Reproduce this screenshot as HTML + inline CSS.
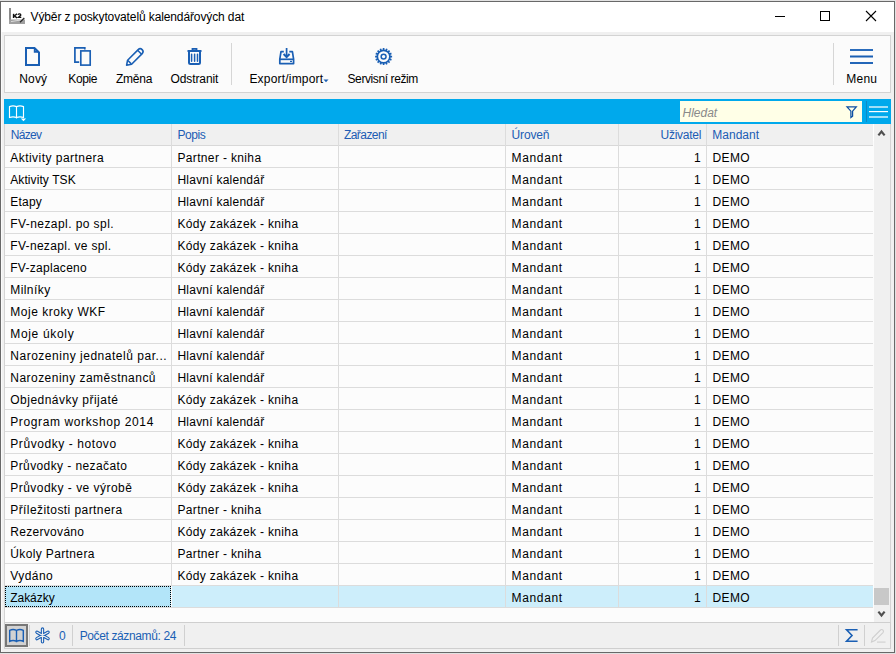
<!DOCTYPE html><html><head><meta charset="utf-8"><style>
*{margin:0;padding:0;box-sizing:border-box}
html,body{width:896px;height:654px;overflow:hidden;background:#e2e2e2}
body{font-family:"Liberation Sans",sans-serif;font-size:12px;color:#000;position:relative}
.a{position:absolute}
.t{position:absolute;white-space:nowrap;line-height:14px}
.lbl{position:absolute;white-space:nowrap;line-height:14px;top:72px}
.ht{position:absolute;top:128px;line-height:14px;color:#205cb4;white-space:nowrap}
.c{position:absolute;line-height:14px;white-space:nowrap;letter-spacing:0.4px}
#ov{position:absolute;left:0;top:0}
</style></head><body>
<div class="a" style="left:0px;top:1px;width:895px;height:652px;background:#686868;"></div>
<div class="a" style="left:1px;top:2px;width:893px;height:650px;background:#f0f0f0;"></div>
<div class="a" style="left:1px;top:2px;width:893px;height:30px;background:#fff;"></div>
<div class="a" style="left:1px;top:32px;width:1px;height:620px;background:#fafafa;"></div>
<div class="a" style="left:4px;top:35px;width:887px;height:58px;background:#fbfbfb;border:1px solid #d3d3d3"></div>
<div class="a" style="left:4px;top:99px;width:887px;height:25px;background:#00a9ec;"></div>
<div class="a" style="left:680px;top:101px;width:182px;height:21px;background:#ffffe7;"></div>
<div class="a" style="left:866px;top:101px;width:1px;height:21px;background:#0f8ac4;"></div>
<div class="a" style="left:4px;top:124px;width:887px;height:498px;background:#fcfcfc;border-left:1px solid #d4d4d4;border-right:1px solid #d4d4d4"></div>
<div class="a" style="left:5px;top:124px;width:868px;height:21px;background:#f0f0f0;"></div>
<div class="a" style="left:5px;top:145px;width:868px;height:1px;background:#d8d8d8;"></div>
<div class="a" style="left:5px;top:167px;width:868px;height:1px;background:#dcdcdc;"></div>
<div class="a" style="left:5px;top:189px;width:868px;height:1px;background:#dcdcdc;"></div>
<div class="a" style="left:5px;top:211px;width:868px;height:1px;background:#dcdcdc;"></div>
<div class="a" style="left:5px;top:233px;width:868px;height:1px;background:#dcdcdc;"></div>
<div class="a" style="left:5px;top:255px;width:868px;height:1px;background:#dcdcdc;"></div>
<div class="a" style="left:5px;top:277px;width:868px;height:1px;background:#dcdcdc;"></div>
<div class="a" style="left:5px;top:299px;width:868px;height:1px;background:#dcdcdc;"></div>
<div class="a" style="left:5px;top:321px;width:868px;height:1px;background:#dcdcdc;"></div>
<div class="a" style="left:5px;top:343px;width:868px;height:1px;background:#dcdcdc;"></div>
<div class="a" style="left:5px;top:365px;width:868px;height:1px;background:#dcdcdc;"></div>
<div class="a" style="left:5px;top:387px;width:868px;height:1px;background:#dcdcdc;"></div>
<div class="a" style="left:5px;top:409px;width:868px;height:1px;background:#dcdcdc;"></div>
<div class="a" style="left:5px;top:431px;width:868px;height:1px;background:#dcdcdc;"></div>
<div class="a" style="left:5px;top:453px;width:868px;height:1px;background:#dcdcdc;"></div>
<div class="a" style="left:5px;top:475px;width:868px;height:1px;background:#dcdcdc;"></div>
<div class="a" style="left:5px;top:497px;width:868px;height:1px;background:#dcdcdc;"></div>
<div class="a" style="left:5px;top:519px;width:868px;height:1px;background:#dcdcdc;"></div>
<div class="a" style="left:5px;top:541px;width:868px;height:1px;background:#dcdcdc;"></div>
<div class="a" style="left:5px;top:563px;width:868px;height:1px;background:#dcdcdc;"></div>
<div class="a" style="left:5px;top:585px;width:868px;height:1px;background:#dcdcdc;"></div>
<div class="a" style="left:5px;top:607px;width:868px;height:1px;background:#dcdcdc;"></div>
<div class="a" style="left:5px;top:586px;width:868px;height:21px;background:#cdeefb;"></div>
<div class="a" style="left:171px;top:124px;width:1px;height:484px;background:#dcdcdc;"></div>
<div class="a" style="left:338px;top:124px;width:1px;height:484px;background:#dcdcdc;"></div>
<div class="a" style="left:505px;top:124px;width:1px;height:484px;background:#dcdcdc;"></div>
<div class="a" style="left:618px;top:124px;width:1px;height:484px;background:#dcdcdc;"></div>
<div class="a" style="left:706px;top:124px;width:1px;height:484px;background:#dcdcdc;"></div>
<div class="a" style="left:5px;top:586px;width:166px;height:21px;background:#b3e5f9;border:1px dotted #000"></div>
<div class="a" style="left:171px;top:586px;width:1px;height:21px;background:#fcfcfc;"></div>
<div class="a" style="left:873px;top:124px;width:1px;height:17px;background:#fff;"></div>
<div class="a" style="left:874px;top:124px;width:16px;height:498px;background:#f0f0f0;"></div>
<div class="a" style="left:874px;top:588px;width:15px;height:17px;background:#c8c8c8;"></div>
<div class="a" style="left:4px;top:622px;width:887px;height:27px;background:#f0f0f0;border:1px solid #cfcfcf"></div>
<div class="a" style="left:5px;top:624px;width:23px;height:23px;background:#d2d2d2;border:2px solid #777"></div>
<div class="a" style="left:29px;top:625px;width:1px;height:21px;background:#d0d0d0;"></div>
<div class="a" style="left:72px;top:625px;width:1px;height:21px;background:#d0d0d0;"></div>
<div class="a" style="left:184px;top:625px;width:1px;height:21px;background:#d0d0d0;"></div>
<div class="a" style="left:838px;top:625px;width:1px;height:21px;background:#d0d0d0;"></div>
<div class="a" style="left:864px;top:625px;width:1px;height:21px;background:#d0d0d0;"></div>
<div class="a" style="left:231px;top:43px;width:1px;height:42px;background:#d6d6d6;"></div>
<div class="a" style="left:833px;top:43px;width:1px;height:42px;background:#d6d6d6;"></div>
<div class="t" style="left:30.5px;top:10px;letter-spacing:-0.113px">Výběr z poskytovatelů kalendářových dat</div>
<div class="lbl" style="left:19.30px;letter-spacing:0.153px">Nový</div>
<div class="lbl" style="left:68.30px;letter-spacing:-0.379px">Kopie</div>
<div class="lbl" style="left:116.00px;letter-spacing:-0.243px">Změna</div>
<div class="lbl" style="left:170.40px;letter-spacing:-0.081px">Odstranit</div>
<div class="lbl" style="left:249.40px;letter-spacing:0.198px">Export/import</div>
<div class="lbl" style="left:347.50px;letter-spacing:-0.401px">Servisní režim</div>
<div class="lbl" style="left:846.30px;letter-spacing:0.219px">Menu</div>
<div class="t" style="left:682.5px;top:106px;color:#8a8a8a;font-style:italic">Hledat</div>
<div class="ht" style="left:10.80px;letter-spacing:-0.728px">Název</div>
<div class="ht" style="left:177.40px;letter-spacing:-0.404px">Popis</div>
<div class="ht" style="left:343.90px;letter-spacing:-0.546px">Zařazení</div>
<div class="ht" style="left:511.60px;letter-spacing:-0.162px">Úroveň</div>
<div class="ht" style="left:660.50px;letter-spacing:-0.259px">Uživatel</div>
<div class="ht" style="left:712.3px">Mandant</div>
<div class="c" style="left:10.25px;top:151px;letter-spacing:0.465px">Aktivity partnera</div>
<div class="c" style="left:177.40px;top:151px;letter-spacing:0.355px">Partner - kniha</div>
<div class="c" style="left:511.60px;top:151px;letter-spacing:0.639px">Mandant</div>
<div class="c" style="left:694px;top:151px">1</div>
<div class="c" style="left:712.60px;top:151px;letter-spacing:0.311px">DEMO</div>
<div class="c" style="left:10.25px;top:173px;letter-spacing:0.084px">Aktivity TSK</div>
<div class="c" style="left:177.40px;top:173px;letter-spacing:0.244px">Hlavní kalendář</div>
<div class="c" style="left:511.60px;top:173px;letter-spacing:0.639px">Mandant</div>
<div class="c" style="left:694px;top:173px">1</div>
<div class="c" style="left:712.60px;top:173px;letter-spacing:0.311px">DEMO</div>
<div class="c" style="left:10.25px;top:195px;letter-spacing:0.229px">Etapy</div>
<div class="c" style="left:177.40px;top:195px;letter-spacing:0.244px">Hlavní kalendář</div>
<div class="c" style="left:511.60px;top:195px;letter-spacing:0.639px">Mandant</div>
<div class="c" style="left:694px;top:195px">1</div>
<div class="c" style="left:712.60px;top:195px;letter-spacing:0.311px">DEMO</div>
<div class="c" style="left:10.25px;top:217px;letter-spacing:0.428px">FV-nezapl. po spl.</div>
<div class="c" style="left:177.40px;top:217px;letter-spacing:0.348px">Kódy zakázek - kniha</div>
<div class="c" style="left:511.60px;top:217px;letter-spacing:0.639px">Mandant</div>
<div class="c" style="left:694px;top:217px">1</div>
<div class="c" style="left:712.60px;top:217px;letter-spacing:0.311px">DEMO</div>
<div class="c" style="left:10.25px;top:239px;letter-spacing:0.321px">FV-nezapl. ve spl.</div>
<div class="c" style="left:177.40px;top:239px;letter-spacing:0.348px">Kódy zakázek - kniha</div>
<div class="c" style="left:511.60px;top:239px;letter-spacing:0.639px">Mandant</div>
<div class="c" style="left:694px;top:239px">1</div>
<div class="c" style="left:712.60px;top:239px;letter-spacing:0.311px">DEMO</div>
<div class="c" style="left:10.25px;top:261px;letter-spacing:0.282px">FV-zaplaceno</div>
<div class="c" style="left:177.40px;top:261px;letter-spacing:0.348px">Kódy zakázek - kniha</div>
<div class="c" style="left:511.60px;top:261px;letter-spacing:0.639px">Mandant</div>
<div class="c" style="left:694px;top:261px">1</div>
<div class="c" style="left:712.60px;top:261px;letter-spacing:0.311px">DEMO</div>
<div class="c" style="left:10.25px;top:283px;letter-spacing:0.427px">Milníky</div>
<div class="c" style="left:177.40px;top:283px;letter-spacing:0.244px">Hlavní kalendář</div>
<div class="c" style="left:511.60px;top:283px;letter-spacing:0.639px">Mandant</div>
<div class="c" style="left:694px;top:283px">1</div>
<div class="c" style="left:712.60px;top:283px;letter-spacing:0.311px">DEMO</div>
<div class="c" style="left:10.25px;top:305px;letter-spacing:0.532px">Moje kroky WKF</div>
<div class="c" style="left:177.40px;top:305px;letter-spacing:0.244px">Hlavní kalendář</div>
<div class="c" style="left:511.60px;top:305px;letter-spacing:0.639px">Mandant</div>
<div class="c" style="left:694px;top:305px">1</div>
<div class="c" style="left:712.60px;top:305px;letter-spacing:0.311px">DEMO</div>
<div class="c" style="left:10.25px;top:327px;letter-spacing:0.671px">Moje úkoly</div>
<div class="c" style="left:177.40px;top:327px;letter-spacing:0.244px">Hlavní kalendář</div>
<div class="c" style="left:511.60px;top:327px;letter-spacing:0.639px">Mandant</div>
<div class="c" style="left:694px;top:327px">1</div>
<div class="c" style="left:712.60px;top:327px;letter-spacing:0.311px">DEMO</div>
<div class="c" style="left:10.25px;top:349px;letter-spacing:0.522px">Narozeniny jednatelů par...</div>
<div class="c" style="left:177.40px;top:349px;letter-spacing:0.244px">Hlavní kalendář</div>
<div class="c" style="left:511.60px;top:349px;letter-spacing:0.639px">Mandant</div>
<div class="c" style="left:694px;top:349px">1</div>
<div class="c" style="left:712.60px;top:349px;letter-spacing:0.311px">DEMO</div>
<div class="c" style="left:10.25px;top:371px;letter-spacing:0.47px">Narozeniny zaměstnanců</div>
<div class="c" style="left:177.40px;top:371px;letter-spacing:0.244px">Hlavní kalendář</div>
<div class="c" style="left:511.60px;top:371px;letter-spacing:0.639px">Mandant</div>
<div class="c" style="left:694px;top:371px">1</div>
<div class="c" style="left:712.60px;top:371px;letter-spacing:0.311px">DEMO</div>
<div class="c" style="left:10.25px;top:393px;letter-spacing:0.487px">Objednávky přijaté</div>
<div class="c" style="left:177.40px;top:393px;letter-spacing:0.348px">Kódy zakázek - kniha</div>
<div class="c" style="left:511.60px;top:393px;letter-spacing:0.639px">Mandant</div>
<div class="c" style="left:694px;top:393px">1</div>
<div class="c" style="left:712.60px;top:393px;letter-spacing:0.311px">DEMO</div>
<div class="c" style="left:10.25px;top:415px;letter-spacing:0.617px">Program workshop 2014</div>
<div class="c" style="left:177.40px;top:415px;letter-spacing:0.244px">Hlavní kalendář</div>
<div class="c" style="left:511.60px;top:415px;letter-spacing:0.639px">Mandant</div>
<div class="c" style="left:694px;top:415px">1</div>
<div class="c" style="left:712.60px;top:415px;letter-spacing:0.311px">DEMO</div>
<div class="c" style="left:10.25px;top:437px;letter-spacing:0.572px">Průvodky - hotovo</div>
<div class="c" style="left:177.40px;top:437px;letter-spacing:0.348px">Kódy zakázek - kniha</div>
<div class="c" style="left:511.60px;top:437px;letter-spacing:0.639px">Mandant</div>
<div class="c" style="left:694px;top:437px">1</div>
<div class="c" style="left:712.60px;top:437px;letter-spacing:0.311px">DEMO</div>
<div class="c" style="left:10.25px;top:459px;letter-spacing:0.405px">Průvodky - nezačato</div>
<div class="c" style="left:177.40px;top:459px;letter-spacing:0.348px">Kódy zakázek - kniha</div>
<div class="c" style="left:511.60px;top:459px;letter-spacing:0.639px">Mandant</div>
<div class="c" style="left:694px;top:459px">1</div>
<div class="c" style="left:712.60px;top:459px;letter-spacing:0.311px">DEMO</div>
<div class="c" style="left:10.25px;top:481px;letter-spacing:0.472px">Průvodky - ve výrobě</div>
<div class="c" style="left:177.40px;top:481px;letter-spacing:0.348px">Kódy zakázek - kniha</div>
<div class="c" style="left:511.60px;top:481px;letter-spacing:0.639px">Mandant</div>
<div class="c" style="left:694px;top:481px">1</div>
<div class="c" style="left:712.60px;top:481px;letter-spacing:0.311px">DEMO</div>
<div class="c" style="left:10.25px;top:503px;letter-spacing:0.425px">Příležitosti partnera</div>
<div class="c" style="left:177.40px;top:503px;letter-spacing:0.355px">Partner - kniha</div>
<div class="c" style="left:511.60px;top:503px;letter-spacing:0.639px">Mandant</div>
<div class="c" style="left:694px;top:503px">1</div>
<div class="c" style="left:712.60px;top:503px;letter-spacing:0.311px">DEMO</div>
<div class="c" style="left:10.25px;top:525px;letter-spacing:0.307px">Rezervováno</div>
<div class="c" style="left:177.40px;top:525px;letter-spacing:0.348px">Kódy zakázek - kniha</div>
<div class="c" style="left:511.60px;top:525px;letter-spacing:0.639px">Mandant</div>
<div class="c" style="left:694px;top:525px">1</div>
<div class="c" style="left:712.60px;top:525px;letter-spacing:0.311px">DEMO</div>
<div class="c" style="left:10.25px;top:547px;letter-spacing:0.37px">Úkoly Partnera</div>
<div class="c" style="left:177.40px;top:547px;letter-spacing:0.355px">Partner - kniha</div>
<div class="c" style="left:511.60px;top:547px;letter-spacing:0.639px">Mandant</div>
<div class="c" style="left:694px;top:547px">1</div>
<div class="c" style="left:712.60px;top:547px;letter-spacing:0.311px">DEMO</div>
<div class="c" style="left:10.25px;top:569px;letter-spacing:0.444px">Vydáno</div>
<div class="c" style="left:177.40px;top:569px;letter-spacing:0.348px">Kódy zakázek - kniha</div>
<div class="c" style="left:511.60px;top:569px;letter-spacing:0.639px">Mandant</div>
<div class="c" style="left:694px;top:569px">1</div>
<div class="c" style="left:712.60px;top:569px;letter-spacing:0.311px">DEMO</div>
<div class="c" style="left:10.25px;top:591px;letter-spacing:-0.046px">Zakázky</div>
<div class="c" style="left:511.60px;top:591px;letter-spacing:0.639px">Mandant</div>
<div class="c" style="left:694px;top:591px">1</div>
<div class="c" style="left:712.60px;top:591px;letter-spacing:0.311px">DEMO</div>
<div class="t" style="left:59px;top:629px;color:#1a5fb4">0</div>
<div class="t" style="left:79.7px;top:629px;color:#1a5fb4;letter-spacing:-0.378px">Počet záznamů: 24</div>
<svg id="ov" width="896" height="654" viewBox="0 0 896 654"><rect x="9" y="8" width="2" height="16" fill="#8a8a8a"/><rect x="9" y="19.5" width="16" height="4.5" fill="#a0a0a0"/><path d="M11 21.6 L17 20.6 L22 19.8" stroke="#e0e0e0" stroke-width="0.9" fill="none"/><path d="M20 22.2 L24.3 18" stroke="#2a2a2a" stroke-width="1.3"/><path d="M13.6 13.8 V18" stroke="#111" stroke-width="1.5"/><path d="M17 13.8 L14.4 15.9 L17.1 18" stroke="#111" stroke-width="1.4" fill="none"/><path d="M17.9 14.8 Q18.5 13.7 19.7 13.8 Q21 14 20.7 15.3 L18.4 17.3 H21.3" stroke="#111" stroke-width="1.3" fill="none"/><rect x="775" y="16" width="10" height="1" fill="#000"/><rect x="820.5" y="11.5" width="9" height="9" fill="none" stroke="#000" stroke-width="1"/><path d="M866 11 L876 21 M876 11 L866 21" stroke="#000" stroke-width="1.1"/><path d="M26 48 H34.5 L39 52.5 V65 H26 Z" fill="none" stroke="#1a5fb4" stroke-width="2" stroke-linejoin="miter"/><path d="M34.6 48 V51.9 H39" fill="none" stroke="#1a5fb4" stroke-width="1.6"/><path d="M35.2 48.2 L38.8 51.6 L35.2 51.6 Z" fill="#1a5fb4" opacity="0.6"/><path d="M79.2 62.2 H74.9 V47.9 H84.8 V49.6" fill="none" stroke="#1a5fb4" stroke-width="1.7" stroke-linejoin="miter"/><rect x="80.8" y="50.9" width="9.4" height="14.2" fill="none" stroke="#1a5fb4" stroke-width="1.65"/><path d="M127.6 60.2 L138.2 49.6 A2.83 2.83 0 0 1 142.2 53.6 L131.6 64.2 L126.6 65.2 Z" fill="none" stroke="#1a5fb4" stroke-width="1.6" stroke-linejoin="round"/><path d="M137.6 50.2 L141.6 54.2 M127.9 60.5 L131.3 63.9" fill="none" stroke="#1a5fb4" stroke-width="1.5"/><path d="M187.5 51 H201.5" fill="none" stroke="#1a5fb4" stroke-width="2"/><path d="M192.5 51 V48.9 H196.5 V51" fill="none" stroke="#1a5fb4" stroke-width="1.8"/><path d="M189 51.5 V62.5 Q189 64 190.5 64 H198.5 Q200 64 200 62.5 V51.5" fill="none" stroke="#1a5fb4" stroke-width="2"/><path d="M191.6 54.3 V61.3 M194.6 54.3 V61.3 M197.5 54.3 V61.3" fill="none" stroke="#1a5fb4" stroke-width="1.5" stroke-linecap="round"/><path d="M283.8 51.7 H281 L279.8 59.2 V63.6 H293.6 V59.2 L292.4 51.7 H289.3" fill="none" stroke="#1a5fb4" stroke-width="1.7" stroke-linejoin="round"/><path d="M279.8 59.3 H293.6" fill="none" stroke="#1a5fb4" stroke-width="1.7"/><path d="M286.6 48 V56.5" fill="none" stroke="#1a5fb4" stroke-width="1.7"/><path d="M283.6 54 L286.6 57 L289.6 54" fill="none" stroke="#1a5fb4" stroke-width="2"/><rect x="290" y="60.8" width="2" height="1.2" fill="#1a5fb4"/><circle cx="383.6" cy="56.6" r="6.3" fill="none" stroke="#1a5fb4" stroke-width="1.7"/><path d="M383.60 50.40 L383.60 48.10 M385.97 50.87 L386.85 48.75 M387.98 52.22 L389.61 50.59 M389.33 54.23 L391.45 53.35 M389.80 56.60 L392.10 56.60 M389.33 58.97 L391.45 59.85 M387.98 60.98 L389.61 62.61 M385.97 62.33 L386.85 64.45 M383.60 62.80 L383.60 65.10 M381.23 62.33 L380.35 64.45 M379.22 60.98 L377.59 62.61 M377.87 58.97 L375.75 59.85 M377.40 56.60 L375.10 56.60 M377.87 54.23 L375.75 53.35 M379.22 52.22 L377.59 50.59 M381.23 50.87 L380.35 48.75 " fill="none" stroke="#1a5fb4" stroke-width="1.7"/><circle cx="383.6" cy="56.6" r="2.45" fill="none" stroke="#1a5fb4" stroke-width="1.5"/><path d="M323.5 79.5 H328.5 L326 82.3 Z" fill="#1a5fb4"/><rect x="850" y="49" width="23" height="2" fill="#2a6cbc"/><rect x="850" y="55.5" width="23" height="2" fill="#1a5fb4"/><rect x="850" y="62" width="23" height="2" fill="#2366b8"/><path d="M9.5 106.6 Q13 105.2 16.5 106.6 Q20 105.2 23.5 106.6 V117.5 Q20 116.2 16.5 117.5 Q13 116.2 9.5 117.5 Z M16.5 106.6 V118.5" fill="none" stroke="#fff" stroke-width="1.15"/><path d="M20.8 118.6 H26.1 L23.5 121.2 Z" fill="#fff"/><path d="M847 106.8 H856.3 L852.6 111.2 V116.3 L850.9 117.6 V111.2 Z" fill="none" stroke="#0d4fa3" stroke-width="1.25" stroke-linejoin="miter"/><path d="M869 107 H888" stroke="#e6f6fd" stroke-width="1.4"/><path d="M869 111.6 H888" stroke="#fff" stroke-width="1.2"/><path d="M869 117 H888" stroke="#e6f6fd" stroke-width="1.4"/><path d="M878.4 135.4 L881.5 131.6 L884.6 135.4" fill="none" stroke="#505050" stroke-width="2.2"/><path d="M878.4 611.6 L881.5 615.4 L884.6 611.6" fill="none" stroke="#505050" stroke-width="2.2"/><path d="M9.7 630.3 Q13 628.8 16.5 630.3 Q20 628.8 23.3 630.3 V641.3 Q20 639.8 16.5 641.3 Q13 639.8 9.7 641.3 Z M16.5 630.3 V642.3" fill="none" stroke="#1a5fb4" stroke-width="1.4"/><path d="M42.50 641.80 L42.50 629.00 M48.04 638.60 L36.96 632.20 M48.04 632.20 L36.96 638.60 " stroke="#1a5fb4" stroke-width="3.4" stroke-linecap="round"/><path d="M42.50 641.80 L42.50 629.00 M48.04 638.60 L36.96 632.20 M48.04 632.20 L36.96 638.60 " stroke="#f0f0f0" stroke-width="1.2" stroke-linecap="round"/><path d="M857.6 629.8 H846.6 L852 635.5 L846.6 641.2 H857.6" fill="none" stroke="#1a5fb4" stroke-width="1.6" stroke-linejoin="miter"/><path d="M871.5 642 L872.5 638 L880.5 630 Q881.8 629 883 630.2 Q884 631.4 883 632.6 L875 640.6 Z" fill="none" stroke="#cfcfcf" stroke-width="1.1"/><path d="M877 642.1 H885.5" stroke="#d2d2d2" stroke-width="1.2"/></svg>
</body></html>
